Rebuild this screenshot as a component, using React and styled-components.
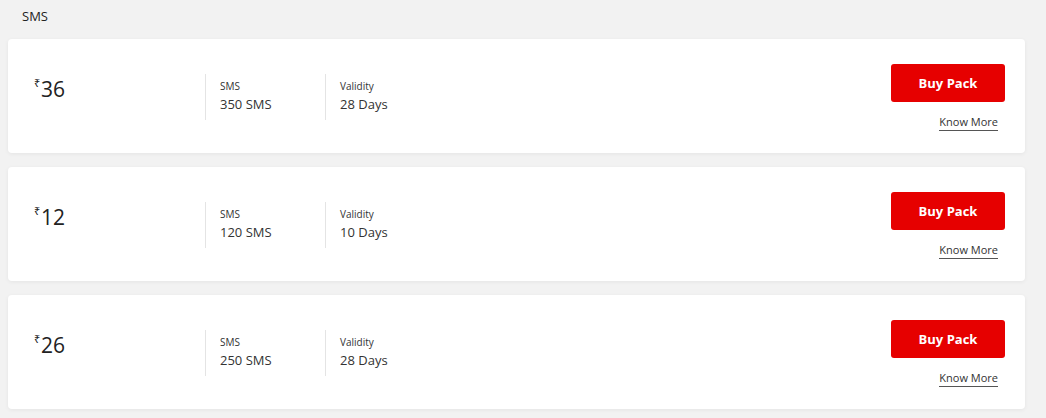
import styled, { createGlobalStyle } from "styled-components";

const GlobalStyle = createGlobalStyle`
  body {
    margin: 0;
    background: #f2f2f2;
    font-family: "Open Sans", "Liberation Sans", sans-serif;
    color: #333;
  }
`;

const Page = styled.div`
  padding: 6px 21px 10px 8px;
`;

const Heading = styled.div`
  font-size: 13px;
  color: #222;
  padding-left: 14px;
  height: 33px;
  line-height: 20px;
`;

const List = styled.div`
  display: flex;
  flex-direction: column;
  gap: 14px;
`;

const Card = styled.div`
  background: #fff;
  border-radius: 4px;
  box-shadow: 0 1px 4px rgba(0, 0, 0, 0.06);
  height: 114px;
  display: flex;
  align-items: center;
  padding: 0 20px 0 26px;
`;

const Price = styled.div`
  width: 171px;
  font-size: 21px;
  color: #222;
  display: flex;
  align-items: flex-start;
  margin-top: -14px;
`;

const Rupee = styled.span`
  font-size: 11px;
  margin-right: 1px;
  line-height: 16px;
`;

const Detail = styled.div`
  width: ${({ $w }) => $w}px;
  border-left: 1px solid #e4e4e4;
  height: 46px;
  padding-left: 14px;
  box-sizing: border-box;
  display: flex;
  flex-direction: column;
  justify-content: center;
  margin-top: 1px;
`;

const Label = styled.div`
  font-size: 10px;
  color: #333;
  line-height: 14px;
`;

const Value = styled.div`
  font-size: 13px;
  color: #333;
  line-height: 22px;
`;

const Actions = styled.div`
  margin-left: auto;
  display: flex;
  flex-direction: column;
  align-items: flex-end;
  gap: 12px;
  margin-top: 2px;
`;

const BuyButton = styled.button`
  width: 114px;
  height: 38px;
  background: #e60000;
  color: #fff;
  border: none;
  border-radius: 3px;
  font-family: inherit;
  font-weight: 700;
  font-size: 13px;
  cursor: pointer;
`;

const KnowMore = styled.a`
  font-size: 11px;
  margin-right: 7px;
  color: #333;
  text-decoration: none;
  border-bottom: 1px solid #555;
  padding-bottom: 1px;
  line-height: 15px;
`;

const packs = [
  { price: 36, sms: "350 SMS", validity: "28 Days" },
  { price: 12, sms: "120 SMS", validity: "10 Days" },
  { price: 26, sms: "250 SMS", validity: "28 Days" },
];

export default function App() {
  return (
    <>
      <GlobalStyle />
      <Page>
        <Heading>SMS</Heading>
        <List>
          {packs.map((p, i) => (
            <Card key={i}>
              <Price>
                <Rupee>₹</Rupee>
                {p.price}
              </Price>
              <Detail $w={120}>
                <Label>SMS</Label>
                <Value>{p.sms}</Value>
              </Detail>
              <Detail $w={120}>
                <Label>Validity</Label>
                <Value>{p.validity}</Value>
              </Detail>
              <Actions>
                <BuyButton>Buy Pack</BuyButton>
                <KnowMore href="#">Know More</KnowMore>
              </Actions>
            </Card>
          ))}
        </List>
      </Page>
    </>
  );
}
